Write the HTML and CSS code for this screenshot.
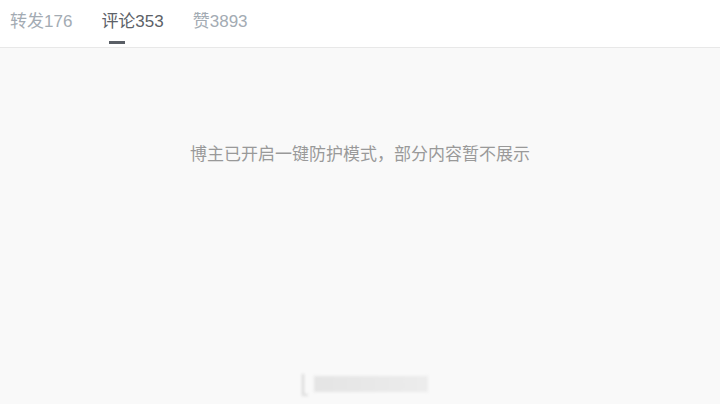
FILE: index.html
```html
<!DOCTYPE html>
<html lang="zh">
<head>
<meta charset="utf-8">
<link rel="stylesheet" href="styles.css">
</head>
<body>
<div class="page">
  <div class="tabs">
    <div class="tab">转发176</div>
    <div class="tab active">评论353</div>
    <div class="tab">赞3893</div>
  </div>
  <div class="content">
    <div class="notice">博主已开启一键防护模式，部分内容暂不展示</div>
    <div class="mark">
      <span class="mark-bar"></span>
      <span class="mark-text"></span>
    </div>
  </div>
</div>
</body>
</html>
```

FILE: styles.css
```css
html, body {
  margin: 0;
  padding: 0;
  width: 720px;
  height: 404px;
  overflow: hidden;
  background: #f9f9f9;
  font-family: "Liberation Sans", Arial, "Noto Sans CJK SC", sans-serif;
}
.page {
  display: flex;
  flex-direction: column;
  height: 404px;
}
.tabs {
  display: flex;
  gap: 29px;
  padding-left: 10px;
  background: #ffffff;
  border-bottom: 1px solid #e8e8e8;
  box-sizing: border-box;
  height: 48px;
}
.tab {
  position: relative;
  font-size: 17px;
  line-height: 17px;
  padding-top: 13px;
  color: #a3abb3;
}
.tab.active {
  color: #5c6167;
}
.tab.active::after {
  content: "";
  position: absolute;
  left: 8px;
  top: 41px;
  width: 16px;
  height: 3px;
  background: #5a5f66;
}
.content {
  flex: 1;
  display: flex;
  flex-direction: column;
  align-items: center;
}
.notice {
  margin-top: 96px;
  font-size: 17px;
  line-height: 22px;
  color: #999999;
}
.mark {
  margin-top: auto;
  margin-bottom: 8px;
  margin-left: 10px;
  display: flex;
  align-items: flex-end;
  gap: 6px;
  height: 24px;
  filter: blur(1.5px);
}
.mark-bar {
  width: 6px;
  height: 22px;
  border-left: 2px solid #d4d4d4;
  border-bottom: 2px solid #dcdcdc;
  box-sizing: border-box;
}
.mark-text {
  width: 114px;
  height: 16px;
  background: linear-gradient(90deg, #e4e4e4, #ececec);
  margin-bottom: 4px;
}
```
